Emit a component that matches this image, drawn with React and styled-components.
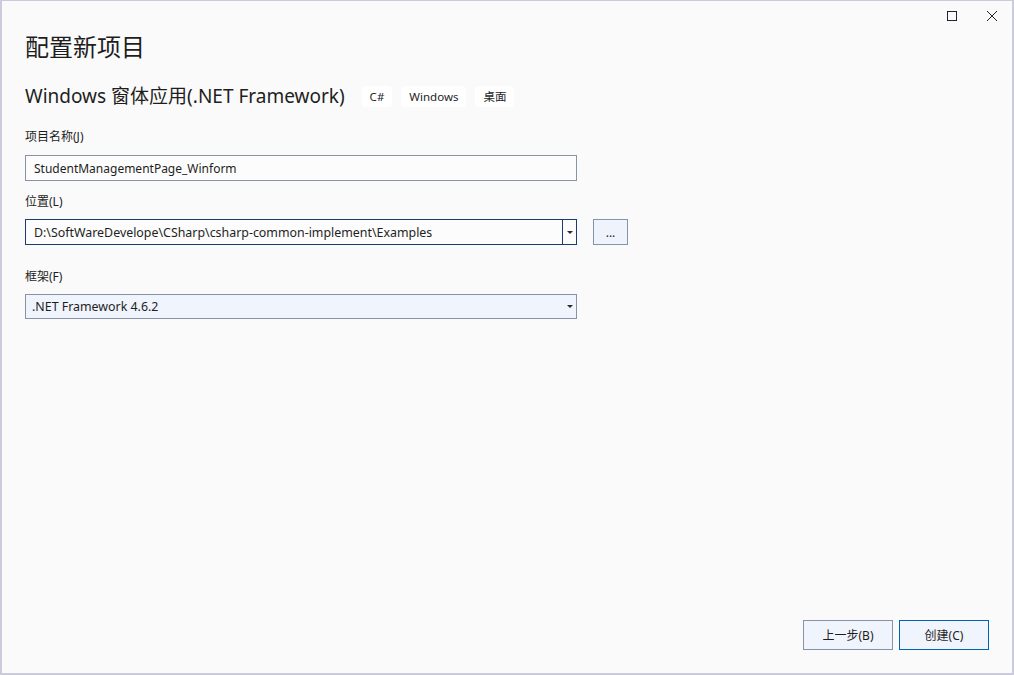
import React from 'react';
import styled, { createGlobalStyle } from 'styled-components';

const GlobalStyle = createGlobalStyle`
    html, body {
        margin: 0;
        padding: 0;
        background: #fafafa;
    }
    body {
        font-family: "Noto Sans", "Noto Sans CJK SC", sans-serif;
        color: #1e1e1e;
    }
`;

const Window = styled.div`
    box-sizing: border-box;
    width: 1014px;
    height: 675px;
    display: flex;
    flex-direction: column;
    background: #fafafa;
    border-style: solid;
    border-color: #cbcbdc;
    border-width: 1px 2px 2px 2px;
`;

const TitleBar = styled.div`
    height: 29px;
    display: flex;
    justify-content: flex-end;
    align-items: center;
`;

const CaptionButton = styled.div`
    width: 40px;
    height: 29px;
    display: flex;
    align-items: center;
    justify-content: center;
    color: #1e2436;
`;

const Content = styled.div`
    flex: 1;
    display: flex;
    flex-direction: column;
    padding: 0 23px 23px 23px;
`;

const Heading = styled.h1`
    margin: 0;
    font-family: "Noto Sans CJK SC", sans-serif;
    font-size: 24px;
    font-weight: 400;
    line-height: 32px;
    color: #1e1e1e;
`;

const SubRow = styled.div`
    display: flex;
    align-items: center;
    gap: 9px;
    margin-top: 22px;
    height: 24px;
`;

const SubTitle = styled.div`
    font-size: 19px;
    line-height: 24px;
    margin-right: 8px;
    color: #1e1e1e;
`;

const Tag = styled.span`
    display: inline-flex;
    align-items: center;
    height: 21px;
    padding: 0 8px;
    border-radius: 4px;
    background: #ffffff;
    font-size: 11.5px;
    color: #1e1e1e;
`;

const Label = styled.div`
    font-size: 12px;
    line-height: 16px;
    margin-top: ${p => p.$top}px;
    color: #1e1e1e;
`;

const FieldRow = styled.div`
    display: flex;
    align-items: center;
    gap: 16px;
    margin-top: ${p => p.$top}px;
`;

const TextBox = styled.div`
    box-sizing: border-box;
    width: 552px;
    height: 26px;
    display: flex;
    align-items: center;
    padding-left: 8px;
    background: #fcfcfc;
    border: 1px solid ${p => (p.$focused ? '#1d3a72' : '#8893a8')};
    font-size: 12px;
    color: #1e1e1e;
    white-space: nowrap;
`;

const ComboBox = styled.div`
    box-sizing: border-box;
    width: 552px;
    height: ${p => p.$height || 26}px;
    display: flex;
    align-items: stretch;
    background: ${p => (p.$readonly ? '#f0f4fc' : '#fcfcfc')};
    border: 1px solid ${p => (p.$focused ? '#1d3a72' : '#8893a8')};
    font-size: 12.4px;
    color: #1e1e1e;
`;

const ComboText = styled.div`
    flex: 1;
    display: flex;
    align-items: center;
    padding-left: ${p => (p.$readonly ? 6 : 8)}px;
    white-space: nowrap;
    overflow: hidden;
`;

const DropButton = styled.div`
    width: 13px;
    display: flex;
    align-items: center;
    justify-content: center;
    border-left: ${p => (p.$divider ? '1px solid #1d3a72' : 'none')};
`;

const Arrow = styled.span`
    width: 0;
    height: 0;
    border-left: 3px solid transparent;
    border-right: 3px solid transparent;
    border-top: 3px solid #2a2a2a;
`;

const SmallButton = styled.div`
    box-sizing: border-box;
    width: 35px;
    height: 26px;
    display: flex;
    align-items: center;
    justify-content: center;
    background: #eff3fb;
    border: 1px solid #8893a8;
    font-size: 12px;
    color: #1e1e1e;
`;

const Footer = styled.div`
    margin-top: auto;
    display: flex;
    justify-content: flex-end;
    gap: 6px;
`;

const DialogButton = styled.div`
    box-sizing: border-box;
    width: 90px;
    height: 30px;
    display: flex;
    align-items: center;
    justify-content: center;
    background: #f0f4fc;
    border: 1px solid ${p => (p.$primary ? '#0063b1' : '#8893a8')};
    font-size: 12px;
    color: #1e1e1e;
`;

const MaximizeIcon = () => (
    <svg width="12" height="12" viewBox="0 0 12 12">
        <rect x="1.5" y="1.5" width="9" height="9" fill="none" stroke="currentColor" strokeWidth="1" />
    </svg>
);

const CloseIcon = () => (
    <svg width="12" height="12" viewBox="0 0 12 12">
        <path d="M1 1 L11 11 M11 1 L1 11" stroke="currentColor" strokeWidth="1" />
    </svg>
);

const App = () => {
    return (
        <>
            <GlobalStyle />
            <Window>
                <TitleBar>
                    <CaptionButton><MaximizeIcon /></CaptionButton>
                    <CaptionButton><CloseIcon /></CaptionButton>
                </TitleBar>
                <Content>
                    <Heading>配置新项目</Heading>
                    <SubRow>
                        <SubTitle>Windows 窗体应用(.NET Framework)</SubTitle>
                        <Tag>C#</Tag>
                        <Tag>Windows</Tag>
                        <Tag>桌面</Tag>
                    </SubRow>

                    <Label $top={21}>项目名称(J)</Label>
                    <FieldRow $top={10}>
                        <TextBox>StudentManagementPage_Winform</TextBox>
                    </FieldRow>

                    <Label $top={13}>位置(L)</Label>
                    <FieldRow $top={9}>
                        <ComboBox $focused>
                            <ComboText>D:\SoftWareDevelope\CSharp\csharp-common-implement\Examples</ComboText>
                            <DropButton $divider><Arrow /></DropButton>
                        </ComboBox>
                        <SmallButton>...</SmallButton>
                    </FieldRow>

                    <Label $top={24}>框架(F)</Label>
                    <FieldRow $top={9}>
                        <ComboBox $readonly $height={25}>
                            <ComboText $readonly>.NET Framework 4.6.2</ComboText>
                            <DropButton><Arrow /></DropButton>
                        </ComboBox>
                    </FieldRow>

                    <Footer>
                        <DialogButton>上一步(B)</DialogButton>
                        <DialogButton $primary>创建(C)</DialogButton>
                    </Footer>
                </Content>
            </Window>
        </>
    );
};

export default App;
